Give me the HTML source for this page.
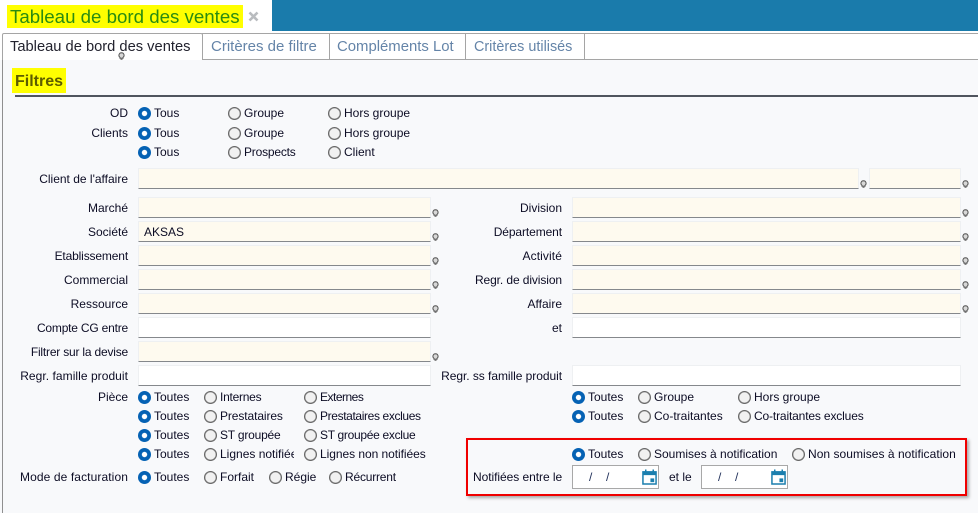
<!DOCTYPE html>
<html lang="fr"><head><meta charset="utf-8"><title>Tableau de bord des ventes</title>
<style>
html,body{margin:0;padding:0}
body{width:978px;height:513px;position:relative;overflow:hidden;background:#fff;font-family:"Liberation Sans",sans-serif;font-size:12px;color:#0c0c24}
div,span,i{position:absolute;display:block;box-sizing:border-box}
.t{line-height:14px;white-space:nowrap}
.l{line-height:14px;white-space:nowrap;text-align:right;left:0;width:128px}
.m{line-height:14px;white-space:nowrap;text-align:right;left:400px;width:162px}
.r{width:13px;height:13px;border-radius:50%;background:#f1f1f1;border:1px solid #666;box-shadow:inset 0 0 0 .4px #888}
.c{width:13px;height:13px;border-radius:50%;background:radial-gradient(circle at 50% 50%,#fff 0,#fff 2.3px,#0562b4 3px)}
.f{height:21px;background:#fefaef;border:1px solid #eef0f2;border-bottom:1px solid #85888c}
.w{height:21px;background:#fff;border:1px solid #eef0f2;border-bottom:1px solid #85888c}
.tab{top:33px;height:27px;border:1px solid #a5a5a5;border-left:0;color:#6484a8;line-height:26px;padding-left:8px;background:#fff;white-space:nowrap}
.h{width:7px;height:8px}
.d{top:465px;height:24px;width:87px;background:#fff;border:1px solid #a8a8a8}
.s{color:#20305a;font-size:12px;line-height:14px}
</style></head><body>
<svg width="0" height="0" style="position:absolute"><defs>
<symbol id="b" viewBox="0 0 7 8"><path d="M3.5.7A2.6 2.6 0 0 1 5 5.4V6.2H2V5.4A2.6 2.6 0 0 1 3.5.7Z" fill="#d8d8d8" stroke="#555" stroke-width="1"/><path d="M2.5 7.3H4.5" stroke="#666" stroke-width="1"/></symbol>
<symbol id="k" viewBox="0 0 16 17"><path d="M1 3H15V16H1Z" fill="#fff" stroke="#1b7fae" stroke-width="1.6"/><path d="M1 2.5H15V6.5H1Z" fill="#1b7fae"/><path d="M4 .5V3M12 .5V3" stroke="#1b7fae" stroke-width="1.6"/><path d="M9 10H13V14H9Z" fill="#1b7fae"/></symbol>
</defs></svg>

<div style="left:272px;top:0;width:706px;height:31px;background:#1a7bab"></div>
<div style="left:7px;top:5px;width:236px;height:23px;background:#ffff00"></div>
<div class="t" style="left:10px;top:5px;font-size:18.7px;line-height:23px;color:#2a8c10">Tableau de bord des ventes</div>
<svg style="position:absolute;left:248px;top:11px" width="11" height="11" viewBox="0 0 11 11"><path d="M1.5 1.5L9.5 9.5M9.5 1.5L1.5 9.5" stroke="#b9bcbf" stroke-width="2.6"/></svg>

<div style="left:0;top:60px;width:978px;height:453px;background:#f8f9fb"></div>
<div style="left:2px;top:59px;width:1px;height:454px;background:#8f8f8f"></div>
<div style="left:202px;top:33px;width:776px;height:1px;background:#a5a5a5"></div>
<div style="left:202px;top:59px;width:776px;height:1px;background:#a5a5a5"></div>
<div class="tab" style="left:202px;width:128px;font-size:15px;padding-left:9px">Critères de filtre</div>
<div class="tab" style="left:330px;width:136px;font-size:14.9px;padding-left:7px">Compléments Lot</div>
<div class="tab" style="left:466px;width:119px;font-size:14.4px">Critères utilisés</div>
<div style="left:2px;top:33px;width:201px;height:27px;background:#fff;border:1px solid #a5a5a5;border-bottom:0;border-radius:2px 2px 0 0"></div>
<div style="left:3px;top:59px;width:199px;height:1px;background:#fff"></div>
<div class="t" style="left:10px;top:40px;font-size:14.7px;color:#22222e">Tableau de bord des ventes</div>
<svg style="position:absolute;left:118px;top:52px" width="7" height="8"><use href="#b"/></svg>

<div style="left:12px;top:68px;width:54px;height:25px;background:#ffff00"></div>
<div class="t" style="left:15px;top:75px;font-size:16px;font-weight:bold;color:#5c5c00">Filtres</div>
<div style="left:15px;top:95px;width:963px;height:2px;background:#50555e"></div>

<div class="l" style="top:106px">OD</div>
<div class="c" style="left:138px;top:107px"></div><div class="t" style="left:154px;top:106px">Tous</div>
<div class="r" style="left:228px;top:107px"></div><div class="t" style="left:244px;top:106px">Groupe</div>
<div class="r" style="left:328px;top:107px"></div><div class="t" style="left:344px;top:106px">Hors groupe</div>

<div class="l" style="top:126px">Clients</div>
<div class="c" style="left:138px;top:127px"></div><div class="t" style="left:154px;top:126px">Tous</div>
<div class="r" style="left:228px;top:127px"></div><div class="t" style="left:244px;top:126px">Groupe</div>
<div class="r" style="left:328px;top:127px"></div><div class="t" style="left:344px;top:126px">Hors groupe</div>

<div class="c" style="left:138px;top:146px"></div><div class="t" style="left:154px;top:145px">Tous</div>
<div class="r" style="left:228px;top:146px"></div><div class="t" style="left:244px;top:145px;letter-spacing:-.2px">Prospects</div>
<div class="r" style="left:328px;top:146px"></div><div class="t" style="left:344px;top:145px">Client</div>

<div class="l" style="top:172px">Client de l'affaire</div>
<div class="f" style="left:138px;top:168px;width:721px"></div>
<div class="f" style="left:869px;top:168px;width:92px"></div>
<svg style="position:absolute;left:860px;top:180px" width="7" height="8"><use href="#b"/></svg>
<svg style="position:absolute;left:962px;top:180px" width="7" height="8"><use href="#b"/></svg>

<div class="l" style="top:201px">Marché</div>
<div class="f" style="left:138px;top:197px;width:293px"></div>
<svg style="position:absolute;left:432px;top:209px" width="7" height="8"><use href="#b"/></svg>
<div class="m" style="top:201px">Division</div>
<div class="f" style="left:572px;top:197px;width:389px"></div>
<svg style="position:absolute;left:962px;top:209px" width="7" height="8"><use href="#b"/></svg>

<div class="l" style="top:225px">Société</div>
<div class="f" style="left:138px;top:221px;width:293px"></div>
<div class="t" style="left:144px;top:225px">AKSAS</div>
<svg style="position:absolute;left:432px;top:233px" width="7" height="8"><use href="#b"/></svg>
<div class="m" style="top:225px;letter-spacing:-.1px">Département</div>
<div class="f" style="left:572px;top:221px;width:389px"></div>
<svg style="position:absolute;left:962px;top:233px" width="7" height="8"><use href="#b"/></svg>

<div class="l" style="top:249px;letter-spacing:-.15px">Etablissement</div>
<div class="f" style="left:138px;top:245px;width:293px"></div>
<svg style="position:absolute;left:432px;top:257px" width="7" height="8"><use href="#b"/></svg>
<div class="m" style="top:249px;letter-spacing:.1px">Activité</div>
<div class="f" style="left:572px;top:245px;width:389px"></div>
<svg style="position:absolute;left:962px;top:257px" width="7" height="8"><use href="#b"/></svg>

<div class="l" style="top:273px">Commercial</div>
<div class="f" style="left:138px;top:269px;width:293px"></div>
<svg style="position:absolute;left:432px;top:281px" width="7" height="8"><use href="#b"/></svg>
<div class="m" style="top:273px;letter-spacing:-.1px">Regr. de division</div>
<div class="f" style="left:572px;top:269px;width:389px"></div>
<svg style="position:absolute;left:962px;top:281px" width="7" height="8"><use href="#b"/></svg>

<div class="l" style="top:297px">Ressource</div>
<div class="f" style="left:138px;top:293px;width:293px"></div>
<svg style="position:absolute;left:432px;top:305px" width="7" height="8"><use href="#b"/></svg>
<div class="m" style="top:297px">Affaire</div>
<div class="f" style="left:572px;top:293px;width:389px"></div>
<svg style="position:absolute;left:962px;top:305px" width="7" height="8"><use href="#b"/></svg>

<div class="l" style="top:321px;letter-spacing:-.2px">Compte CG entre</div>
<div class="w" style="left:138px;top:317px;width:293px"></div>
<div class="m" style="top:321px">et</div>
<div class="w" style="left:572px;top:317px;width:389px"></div>

<div class="l" style="top:345px;letter-spacing:-.2px">Filtrer sur la devise</div>
<div class="f" style="left:138px;top:341px;width:293px"></div>
<svg style="position:absolute;left:432px;top:353px" width="7" height="8"><use href="#b"/></svg>

<div class="l" style="top:369px;letter-spacing:.05px">Regr. famille produit</div>
<div class="w" style="left:138px;top:365px;width:293px"></div>
<div class="m" style="top:369px;letter-spacing:-.05px">Regr. ss famille produit</div>
<div class="w" style="left:572px;top:365px;width:389px"></div>

<div class="l" style="top:390px">Pièce</div>
<div class="c" style="left:138px;top:391px"></div><div class="t" style="left:154px;top:390px">Toutes</div>
<div class="r" style="left:204px;top:391px"></div><div class="t" style="left:220px;top:390px;letter-spacing:-.25px">Internes</div>
<div class="r" style="left:304px;top:391px"></div><div class="t" style="left:320px;top:390px;letter-spacing:-.5px">Externes</div>
<div class="c" style="left:572px;top:391px"></div><div class="t" style="left:588px;top:390px">Toutes</div>
<div class="r" style="left:638px;top:391px"></div><div class="t" style="left:654px;top:390px">Groupe</div>
<div class="r" style="left:738px;top:391px"></div><div class="t" style="left:754px;top:390px">Hors groupe</div>

<div class="c" style="left:138px;top:410px"></div><div class="t" style="left:154px;top:409px">Toutes</div>
<div class="r" style="left:204px;top:410px"></div><div class="t" style="left:220px;top:409px;letter-spacing:-.1px">Prestataires</div>
<div class="r" style="left:304px;top:410px"></div><div class="t" style="left:320px;top:409px;letter-spacing:-.37px">Prestataires exclues</div>
<div class="c" style="left:572px;top:410px"></div><div class="t" style="left:588px;top:409px">Toutes</div>
<div class="r" style="left:638px;top:410px"></div><div class="t" style="left:654px;top:409px">Co-traitantes</div>
<div class="r" style="left:738px;top:410px"></div><div class="t" style="left:754px;top:409px;letter-spacing:-.15px">Co-traitantes exclues</div>

<div class="c" style="left:138px;top:429px"></div><div class="t" style="left:154px;top:428px">Toutes</div>
<div class="r" style="left:204px;top:429px"></div><div class="t" style="left:220px;top:428px;letter-spacing:-.2px">ST groupée</div>
<div class="r" style="left:304px;top:429px"></div><div class="t" style="left:320px;top:428px;letter-spacing:-.3px">ST groupée exclue</div>

<div class="c" style="left:138px;top:448px"></div><div class="t" style="left:154px;top:447px">Toutes</div>
<div class="r" style="left:204px;top:448px"></div><div class="t" style="left:220px;top:447px;width:74px;overflow:hidden">Lignes notifiées</div>
<div class="r" style="left:304px;top:448px"></div><div class="t" style="left:320px;top:447px;letter-spacing:-.05px">Lignes non notifiées</div>

<div class="l" style="top:470px;letter-spacing:.1px">Mode de facturation</div>
<div class="c" style="left:138px;top:471px"></div><div class="t" style="left:154px;top:470px">Toutes</div>
<div class="r" style="left:204px;top:471px"></div><div class="t" style="left:220px;top:470px">Forfait</div>
<div class="r" style="left:269px;top:471px"></div><div class="t" style="left:285px;top:470px">Régie</div>
<div class="r" style="left:329px;top:471px"></div><div class="t" style="left:345px;top:470px;letter-spacing:-.2px">Récurrent</div>

<div style="left:466px;top:438px;width:501px;height:58px;border:2px solid #f00000;box-shadow:2px 2px 3px #a8a8a8"></div>
<div class="c" style="left:572px;top:448px"></div><div class="t" style="left:588px;top:447px">Toutes</div>
<div class="r" style="left:638px;top:448px"></div><div class="t" style="left:654px;top:447px">Soumises à notification</div>
<div class="r" style="left:792px;top:448px"></div><div class="t" style="left:808px;top:447px;letter-spacing:.04px">Non soumises à notification</div>
<div class="t" style="left:473px;top:470px;letter-spacing:-.05px">Notifiées entre le</div>
<div class="d" style="left:572px"></div>
<div class="s" style="left:589px;top:470px">/</div><div class="s" style="left:606px;top:470px">/</div>
<svg style="position:absolute;left:642px;top:469px" width="15" height="16" viewBox="0 0 16 17"><use href="#k"/></svg>
<div class="t" style="left:669px;top:470px">et le</div>
<div class="d" style="left:701px"></div>
<div class="s" style="left:718px;top:470px">/</div><div class="s" style="left:735px;top:470px">/</div>
<svg style="position:absolute;left:771px;top:469px" width="15" height="16" viewBox="0 0 16 17"><use href="#k"/></svg>
</body></html>
